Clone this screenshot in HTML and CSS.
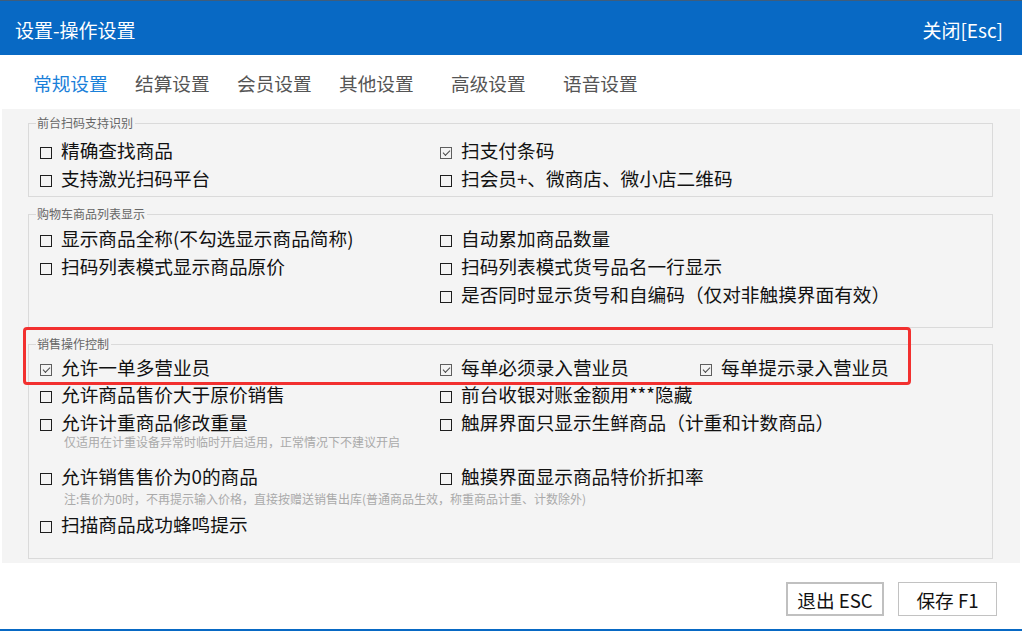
FILE: index.html
```html
<!DOCTYPE html>
<html lang="zh-CN">
<head>
    <meta charset="UTF-8">
    <title>设置-操作设置</title>
    <link rel="stylesheet" href="styles.css">
</head>
<body>
    <div class="window">
        <header class="titlebar">
            <span class="title">设置-操作设置</span>
            <span class="close">关闭[Esc]</span>
        </header>

        <nav class="tabs">
            <span class="tab active">常规设置</span>
            <span class="tab">结算设置</span>
            <span class="tab">会员设置</span>
            <span class="tab tab-wide">其他设置</span>
            <span class="tab tab-wide">高级设置</span>
            <span class="tab">语音设置</span>
        </nav>

        <main class="panel">
            <fieldset class="group group-first">
                <legend>前台扫码支持识别</legend>
                <div class="row">
                    <label class="opt"><span class="box"></span>精确查找商品</label>
                    <label class="opt checked"><span class="box"></span>扫支付条码</label>
                </div>
                <div class="row">
                    <label class="opt"><span class="box"></span>支持激光扫码平台</label>
                    <label class="opt"><span class="box"></span>扫会员+、微商店、微小店二维码</label>
                </div>
            </fieldset>

            <fieldset class="group group-list">
                <legend>购物车商品列表显示</legend>
                <div class="row">
                    <label class="opt"><span class="box"></span>显示商品全称(不勾选显示商品简称)</label>
                    <label class="opt"><span class="box"></span>自动累加商品数量</label>
                </div>
                <div class="row">
                    <label class="opt"><span class="box"></span>扫码列表模式显示商品原价</label>
                    <label class="opt"><span class="box"></span>扫码列表模式货号品名一行显示</label>
                </div>
                <div class="row">
                    <span class="opt"></span>
                    <label class="opt"><span class="box"></span>是否同时显示货号和自编码（仅对非触摸界面有效）</label>
                </div>
            </fieldset>

            <fieldset class="group group-sales">
                <legend>销售操作控制</legend>
                <div class="row row-short">
                    <label class="opt checked"><span class="box"></span>允许一单多营业员</label>
                    <label class="opt opt-mid checked"><span class="box"></span>每单必须录入营业员</label>
                    <label class="opt checked"><span class="box"></span>每单提示录入营业员</label>
                </div>
                <div class="row">
                    <label class="opt"><span class="box"></span>允许商品售价大于原价销售</label>
                    <label class="opt"><span class="box"></span>前台收银对账金额用***隐藏</label>
                </div>
                <div class="row">
                    <div class="opt">
                        <label><span class="box"></span>允许计重商品修改重量</label>
                        <p class="hint">仅适用在计重设备异常时临时开启适用，正常情况下不建议开启</p>
                    </div>
                    <label class="opt"><span class="box"></span>触屏界面只显示生鲜商品（计重和计数商品）</label>
                </div>
                <div class="row">
                    <div class="opt">
                        <label><span class="box"></span>允许销售售价为0的商品</label>
                        <p class="hint hint-loose">注:售价为0时，不再提示输入价格，直接按赠送销售出库(普通商品生效，称重商品计重、计数除外)</p>
                    </div>
                    <label class="opt"><span class="box"></span>触摸界面显示商品特价折扣率</label>
                </div>
                <div class="row">
                    <label class="opt"><span class="box"></span>扫描商品成功蜂鸣提示</label>
                </div>
            </fieldset>
        </main>

        <footer class="actions">
            <button class="btn btn-focus">退出 ESC</button>
            <button class="btn">保存 F1</button>
        </footer>

        <!-- annotation over the sales group -->
        <div class="highlight"></div>
    </div>
</body>
</html>
```

FILE: styles.css
```css
* {
    box-sizing: border-box;
}
body {
    margin: 0;
    font-family: "Noto Sans CJK SC", "Noto Sans", sans-serif;
    color: #111;
    background: #fff;
}
.window {
    position: relative;
    width: 1022px;
    height: 631px;
    overflow: hidden;
    border-bottom: 2px solid #0869c4;
}
.titlebar {
    height: 55px;
    padding: 3px 19px 0 15px;
    border-top: 1px solid #3f5d7c;
    background: #0869c4;
    color: #fff;
    font-size: 19px;
    display: flex;
    align-items: center;
    justify-content: space-between;
}
.tabs {
    height: 54px;
    padding: 14px 0 0 33px;
    display: flex;
    font-size: 18.67px;
    line-height: 28px;
    color: #555;
}
.tab {
    width: 102px;
    flex-shrink: 0;
}
.tab-wide {
    width: 112px;
}
.tab.active {
    color: #1a80d9;
}
.panel {
    height: 454px;
    margin: 0 2px;
    padding: 6px 27px 0 26px;
    background: #f4f4f4;
}
.group {
    margin: 0;
    padding: 0 11px 0 11px;
    border: 1px solid #dadada;
    min-width: 0;
}
.group legend {
    margin-left: -4px;
    padding: 0 2px 0 1px;
    font-size: 12px;
    line-height: 16px;
    color: #666;
}
.group-first {
    padding-top: 5px;
    padding-bottom: 4px;
}
.group-list {
    margin-top: 9px;
    padding-top: 2px;
    padding-bottom: 19px;
}
.group-sales {
    margin-top: 8px;
    padding-top: 2px;
    padding-bottom: 20px;
}
.row {
    display: flex;
    font-size: 18.67px;
    line-height: 28px;
}
.row-short {
    line-height: 26px;
}
.opt {
    width: 400px;
    flex-shrink: 0;
    white-space: nowrap;
}
.opt:last-child {
    width: auto;
}
.opt-mid {
    width: 260px;
}
.box {
    display: inline-block;
    position: relative;
    width: 12px;
    height: 12px;
    margin-right: 9px;
    vertical-align: -1px;
    border: 1px solid #1e1e1e;
}
.checked .box {
    border-color: #5e5e5e;
}
.checked .box::after {
    content: '';
    position: absolute;
    left: 2px;
    top: 2px;
    width: 6px;
    height: 3px;
    border-left: 1.4px solid #4a4a4a;
    border-bottom: 1.4px solid #4a4a4a;
    transform: rotate(-45deg);
}
.hint {
    margin: 0 0 14px 0;
    padding-left: 24px;
    font-size: 12px;
    line-height: 12px;
    color: #aaa;
}
.hint-loose {
    margin-top: 3px;
    margin-bottom: 5px;
}
.actions {
    height: 66px;
    padding: 19px 25px 0 0;
    display: flex;
    justify-content: flex-end;
    gap: 14px;
}
.btn {
    width: 99px;
    height: 34px;
    padding: 0;
    background: #fff;
    border: 1px solid #c2c2c2;
    font-family: inherit;
    font-size: 18.67px;
    color: #111;
}
.btn-focus {
    width: 98px;
    border: 2px solid #c0c0c0;
}
.highlight {
    position: absolute;
    left: 23px;
    top: 327px;
    width: 888px;
    height: 58px;
    border: 3px solid #f2302f;
    border-radius: 4px;
    pointer-events: none;
}
```
